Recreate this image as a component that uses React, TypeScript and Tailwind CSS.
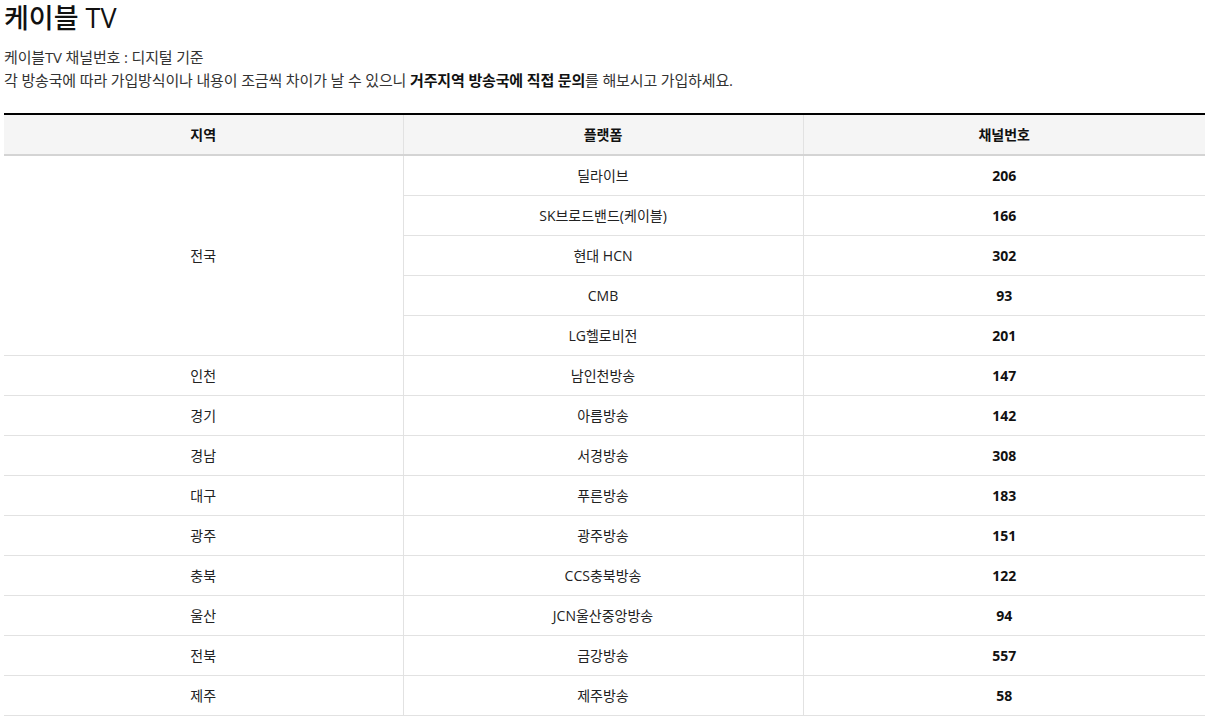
import React from "react";

const ff = { fontFamily: '"Open Sans", "Noto Sans CJK KR", sans-serif' };

type Row = { region?: string; span?: number; platform: string; ch: string };

const rows: Row[] = [
  { region: "전국", span: 5, platform: "딜라이브", ch: "206" },
  { platform: "SK브로드밴드(케이블)", ch: "166" },
  { platform: "현대 HCN", ch: "302" },
  { platform: "CMB", ch: "93" },
  { platform: "LG헬로비전", ch: "201" },
  { region: "인천", platform: "남인천방송", ch: "147" },
  { region: "경기", platform: "아름방송", ch: "142" },
  { region: "경남", platform: "서경방송", ch: "308" },
  { region: "대구", platform: "푸른방송", ch: "183" },
  { region: "광주", platform: "광주방송", ch: "151" },
  { region: "충북", platform: "CCS충북방송", ch: "122" },
  { region: "울산", platform: "JCN울산중앙방송", ch: "94" },
  { region: "전북", platform: "금강방송", ch: "557" },
  { region: "제주", platform: "제주방송", ch: "58" },
];

export default function App() {
  return (
    <div className="bg-white text-[#111] pl-[4px] w-[1205px]" style={ff}>
      <h1 className="text-[27px] leading-[36px] font-medium">케이블 TV</h1>
      <div className="mt-[10px] text-[15px] leading-[23px] text-[#333] tracking-[-0.15px]">
        <p>케이블TV 채널번호 : 디지털 기준</p>
        <p>
          각 방송국에 따라 가입방식이나 내용이 조금씩 차이가 날 수 있으니{" "}
          <b className="font-bold text-[#111]">거주지역 방송국에 직접 문의</b>를 해보시고 가입하세요.
        </p>
      </div>
      <table className="mt-[21px] w-[1201px] border-collapse table-fixed border-t-2 border-t-black text-[14px] text-[#222]">
        <colgroup>
          <col className="w-[399px]" />
          <col className="w-[400px]" />
          <col className="w-[402px]" />
        </colgroup>
        <thead>
          <tr className="bg-[#f5f5f5] h-[41px] border-b-2 border-b-[#d4d4d4]">
            <th className="font-bold text-[#111] border-r border-r-[#e2e2e2]">지역</th>
            <th className="font-bold text-[#111] border-r border-r-[#e2e2e2]">플랫폼</th>
            <th className="font-bold text-[#111]">채널번호</th>
          </tr>
        </thead>
        <tbody>
          {rows.map((r, i) => (
            <tr key={i} className="h-[40px] border-b border-b-[#e2e2e2]">
              {r.region !== undefined && (
                <td rowSpan={r.span ?? 1} className="text-center border-r border-r-[#e2e2e2] p-0 align-middle">
                  {r.region}
                </td>
              )}
              <td className="text-center border-r border-r-[#e2e2e2] p-0">{r.platform}</td>
              <td className="text-center font-bold text-[#111] p-0">{r.ch}</td>
            </tr>
          ))}
        </tbody>
      </table>
    </div>
  );
}
